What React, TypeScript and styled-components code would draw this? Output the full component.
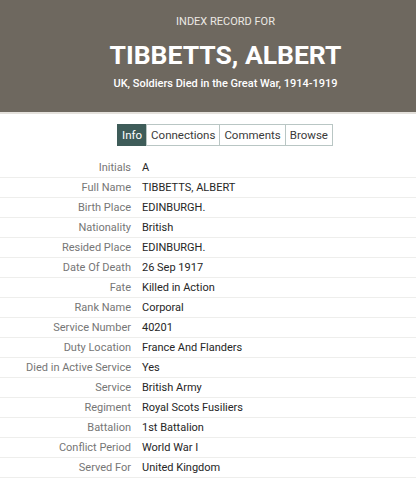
import React, { useState } from "react";
import styled, { createGlobalStyle } from "styled-components";

const GlobalStyle = createGlobalStyle`
  html, body { margin: 0; padding: 0; background: #ffffff; }
  body { font-family: Roboto, "Noto Sans", "Liberation Sans", sans-serif; }
`;

const Header = styled.header`
  background: #6e685f;
  height: 112px;
  border-bottom: 2px solid #e4e1dc;
  color: #ffffff;
  display: flex;
  flex-direction: column;
  align-items: center;
  padding-left: 35px;
  box-sizing: content-box;
`;

const Kicker = styled.div`
  margin-top: 15px;
  font-size: 11px;
  line-height: 14px;
  color: #ece9e4;
`;

const Title = styled.h1`
  margin: 11px 0 0;
  font-size: 26.5px;
  line-height: 30px;
  font-weight: 700;
`;

const Subtitle = styled.div`
  margin-top: 7px;
  font-size: 11px;
  line-height: 14px;
  font-weight: 500;
`;

const Tabs = styled.nav`
  display: flex;
  justify-content: center;
  padding-left: 35px;
  margin-top: 10px;
`;

const Tab = styled.button<{ $active?: boolean }>`
  font-family: inherit;
  font-size: 11.5px;
  height: 22px;
  padding: 0 4px;
  margin-left: -1px;
  border: 1px solid ${(p) => (p.$active ? "#3e5c59" : "#b9c6c4")};
  background: ${(p) => (p.$active ? "#3e5c59" : "#ffffff")};
  color: ${(p) => (p.$active ? "#ffffff" : "#3a3a3a")};
  cursor: pointer;
`;

const Table = styled.div`
  margin-top: 12px;
  display: flex;
  flex-direction: column;
`;

const Row = styled.div`
  display: grid;
  grid-template-columns: 131px 1fr;
  column-gap: 11px;
  height: 20px;
  box-sizing: border-box;
  align-items: center;
  border-bottom: 1px solid #eeeeec;
  font-size: 11px;
`;

const Label = styled.div`
  text-align: right;
  color: #767676;
  white-space: nowrap;
`;

const Value = styled.div`
  color: #262626;
  white-space: nowrap;
`;

const rows: [string, string][] = [
  ["Initials", "A"],
  ["Full Name", "TIBBETTS, ALBERT"],
  ["Birth Place", "EDINBURGH."],
  ["Nationality", "British"],
  ["Resided Place", "EDINBURGH."],
  ["Date Of Death", "26 Sep 1917"],
  ["Fate", "Killed in Action"],
  ["Rank Name", "Corporal"],
  ["Service Number", "40201"],
  ["Duty Location", "France And Flanders"],
  ["Died in Active Service", "Yes"],
  ["Service", "British Army"],
  ["Regiment", "Royal Scots Fusiliers"],
  ["Battalion", "1st Battalion"],
  ["Conflict Period", "World War I"],
  ["Served For", "United Kingdom"],
];

const tabs = ["Info", "Connections", "Comments", "Browse"];

export default function App() {
  const [active, setActive] = useState("Info");
  return (
    <>
      <GlobalStyle />
      <Header>
        <Kicker>INDEX RECORD FOR</Kicker>
        <Title>TIBBETTS, ALBERT</Title>
        <Subtitle>UK, Soldiers Died in the Great War, 1914-1919</Subtitle>
      </Header>
      <Tabs>
        {tabs.map((t) => (
          <Tab key={t} $active={t === active} onClick={() => setActive(t)}>
            {t}
          </Tab>
        ))}
      </Tabs>
      <Table>
        {rows.map(([k, v]) => (
          <Row key={k}>
            <Label>{k}</Label>
            <Value>{v}</Value>
          </Row>
        ))}
      </Table>
    </>
  );
}
